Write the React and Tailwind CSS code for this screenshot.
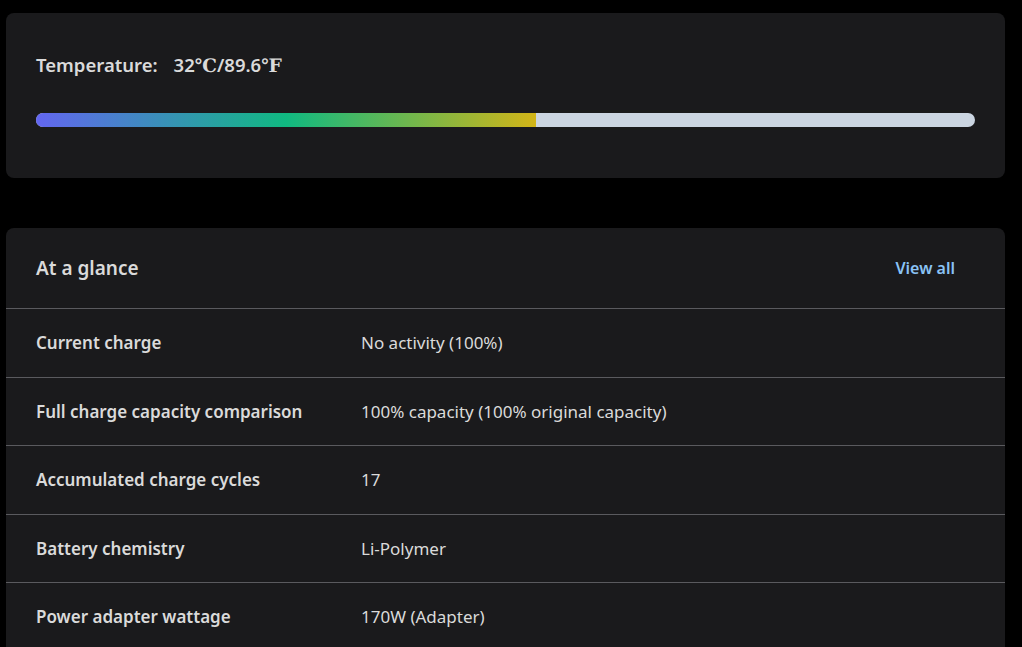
export default function App() {
  const rows = [
    ["Current charge", "No activity (100%)"],
    ["Full charge capacity comparison", "100% capacity (100% original capacity)"],
    ["Accumulated charge cycles", "17"],
    ["Battery chemistry", "Li-Polymer"],
    ["Power adapter wattage", "170W (Adapter)"],
  ];
  return (
    <div className="h-[647px] overflow-hidden bg-black pl-[6px] pr-[17px] pt-[13px] text-[#dadada] font-['Noto_Sans',sans-serif]">
      {/* Temperature card */}
      <div className="h-[165px] rounded-lg bg-[#1a1a1c] px-[30px] pt-[40px]">
        <div className="text-[18.5px] font-semibold leading-[24px]">
          Temperature:
          <span className="ml-[16px]">
            32<span className="font-['DejaVu_Serif',serif] font-bold">℃</span>/89.6<span className="font-['DejaVu_Serif',serif] font-bold">℉</span>
          </span>
        </div>
        <div className="mt-[35px] h-[14px] overflow-hidden rounded-full bg-[#cbd5e1]">
          <div
            className="h-full bg-[linear-gradient(90deg,#6366f1_0%,#10b981_50%,#d2b518_100%)]"
            style={{ width: "53.3%" }}
          />
        </div>
      </div>

      {/* Summary card */}
      <div className="mt-[50px] rounded-t-lg bg-[#1a1a1c]">
        <div className="flex h-[81px] items-center justify-between border-b border-[#5a5a5e] pl-[30px] pr-[50px]">
          <div className="text-[19px] font-semibold">At a glance</div>
          <div className="text-[16px] font-semibold text-[#8ac3f5]">View all</div>
        </div>
        {rows.map(([k, v]) => (
          <div key={k} className="flex h-[68.5px] items-center border-b border-[#5a5a5e] pl-[30px] text-[17px]">
            <div className="w-[325px] font-semibold">{k}</div>
            <div>{v}</div>
          </div>
        ))}
      </div>
    </div>
  );
}
